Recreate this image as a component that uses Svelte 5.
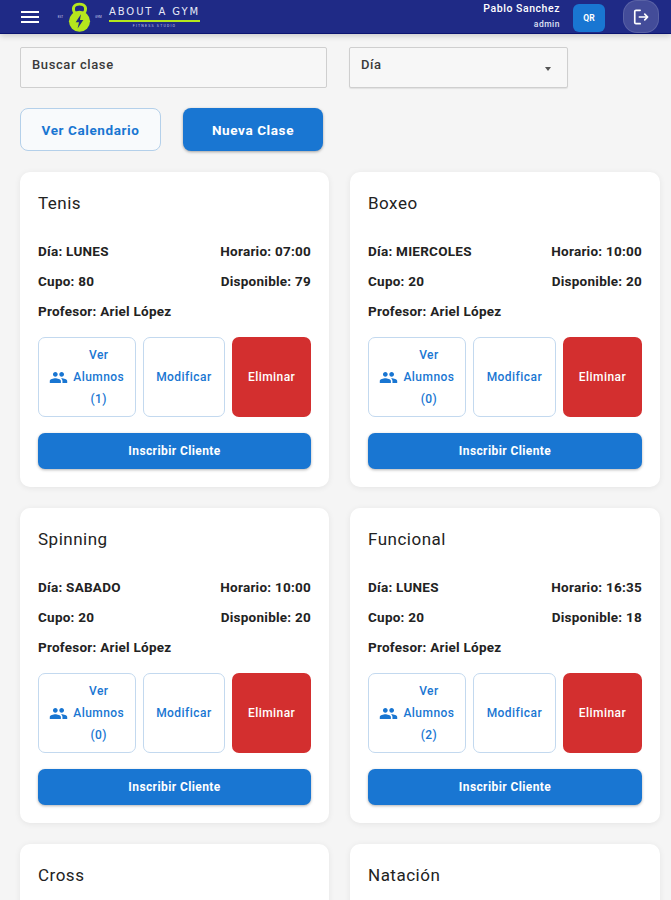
<script>
  const clases = [
    { nombre: "Tenis", dia: "LUNES", horario: "07:00", cupo: 80, disponible: 79, alumnos: 1 },
    { nombre: "Boxeo", dia: "MIERCOLES", horario: "10:00", cupo: 20, disponible: 20, alumnos: 0 },
    { nombre: "Spinning", dia: "SABADO", horario: "10:00", cupo: 20, disponible: 20, alumnos: 0 },
    { nombre: "Funcional", dia: "LUNES", horario: "16:35", cupo: 20, disponible: 18, alumnos: 2 },
    { nombre: "Cross" },
    { nombre: "Natación" },
  ];
</script>

<div class="page">
  <header class="topbar">
    <button class="menu" aria-label="Menu">
      <span></span><span></span><span></span>
    </button>
    <div class="logo">
      <span class="est">EST</span>
      <svg class="bell" viewBox="0 0 24 32" width="23" height="31">
        <path d="M7.5 12 C4 7 5.500 2 12 2 C18.500 2 20 7 16.500 12" fill="none" stroke="#b5e61d" stroke-width="3" />
        <ellipse cx="12" cy="20" rx="11" ry="11" fill="#b5e61d" />
        <path d="M13.500 12.500 L8 21 H11.500 L10 27.500 L16 18.500 H12.500 Z" fill="#1f2a86" />
      </svg>
      <span class="est">GYM</span>
      <div class="brand">
        <span class="brand-name">ABOUT A GYM</span>
        <span class="brand-line"></span>
        <span class="brand-sub">FITNESS STUDIO</span>
      </div>
    </div>
    <div class="user">
      <span class="user-name">Pablo Sanchez</span>
      <span class="user-role">admin</span>
    </div>
    <button class="qr">QR</button>
    <button class="logout" aria-label="Salir">
      <svg viewBox="0 0 24 24" width="20" height="20" fill="none" stroke="#fff" stroke-width="2" stroke-linecap="round" stroke-linejoin="round">
        <path d="M11 4H6a1.500 1.500 0 0 0-1.500 1.500v13A1.500 1.500 0 0 0 6 20h5" />
        <path d="M10 12h10M16.500 8.500 20 12l-3.500 3.500" />
      </svg>
    </button>
  </header>

  <main class="content">
    <div class="filters">
      <div class="field search">Buscar clase</div>
      <div class="field select">
        Día
        <span class="caret"></span>
      </div>
    </div>

    <div class="actions">
      <button class="btn-calendar">Ver Calendario</button>
      <button class="btn-new">Nueva Clase</button>
    </div>

    <div class="grid">
      {#each clases as clase}
        <article class="card">
          <h2>{clase.nombre}</h2>
          {#if clase.dia}
            <div class="row">
              <span>Día: {clase.dia}</span>
              <span>Horario: {clase.horario}</span>
            </div>
            <div class="row">
              <span>Cupo: {clase.cupo}</span>
              <span>Disponible: {clase.disponible}</span>
            </div>
            <div class="row">
              <span>Profesor: Ariel López</span>
            </div>
            <div class="card-buttons">
              <button class="outline alumnos">
                <svg viewBox="0 0 24 24" width="19" height="19" fill="#1976d2">
                  <path d="M16 11c1.660 0 2.990-1.340 2.990-3S17.660 5 16 5s-3 1.340-3 3 1.340 3 3 3zm-8 0c1.660 0 2.990-1.340 2.990-3S9.660 5 8 5 5 6.340 5 8s1.340 3 3 3zm0 2c-2.330 0-7 1.170-7 3.500V19h14v-2.500c0-2.330-4.670-3.500-7-3.500zm8 0c-.290 0-.620.020-.970.050 1.160.840 1.970 1.970 1.970 3.450V19h6v-2.500c0-2.330-4.670-3.500-7-3.500z" />
                </svg>
                <span class="alumnos-text">Ver<br />Alumnos<br />({clase.alumnos})</span>
              </button>
              <button class="outline modificar">Modificar</button>
              <button class="danger">Eliminar</button>
            </div>
            <button class="inscribir">Inscribir Cliente</button>
          {/if}
        </article>
      {/each}
    </div>
  </main>
</div>

<style>
  :global(body) {
    overflow: hidden;
  }

  .page {
    height: 900px;
    overflow: hidden;
    background: #f5f5f5;
    font-family: Roboto, "Liberation Sans", sans-serif;
    color: #222;
  }

  button {
    font-family: inherit;
    cursor: pointer;
  }

  .topbar {
    height: 33px;
    display: flex;
    align-items: center;
    background: #1f2a86;
    border-bottom: 1px solid #0b1470;
    box-shadow: 0 2px 6px rgba(0, 0, 0, 0.18);
    color: #fff;
    box-sizing: content-box;
  }

  .menu {
    width: 18px;
    margin-left: 21px;
    padding: 0;
    display: flex;
    flex-direction: column;
    gap: 3px;
    background: none;
    border: none;
  }

  .menu span {
    height: 2px;
    background: #fff;
  }

  .logo {
    display: flex;
    align-items: center;
    margin-left: 17px;
    gap: 3px;
  }

  .est {
    font-size: 3px;
    width: 9px;
    text-align: center;
    color: #cfd3ee;
  }

  .bell {
    margin-top: 2px;
  }

  .brand {
    display: flex;
    flex-direction: column;
    align-items: center;
    margin-left: 3px;
    margin-top: 3px;
    width: 91px;
  }

  .brand-name {
    font-family: "DejaVu Sans", sans-serif;
    font-size: 10px;
    line-height: 12px;
    letter-spacing: 1.900px;
    white-space: nowrap;
    color: #e8eaf8;
  }

  .brand-line {
    width: 100%;
    height: 2px;
    margin-top: 2px;
    background: #b5e61d;
  }

  .brand-sub {
    font-size: 3.500px;
    line-height: 8px;
    letter-spacing: 1.200px;
    color: #c5c9e8;
  }

  .user {
    margin-left: auto;
    display: flex;
    flex-direction: column;
    align-items: flex-end;
    font-weight: 500;
  }

  .user-name {
    font-size: 10.500px;
    line-height: 15px;
    letter-spacing: 0.550px;
  }

  .user-role {
    font-size: 8.500px;
    line-height: 15px;
    margin-top: 1px;
    letter-spacing: 0.500px;
    color: #dfe2f5;
  }

  .qr {
    width: 32px;
    height: 28px;
    margin-left: 13px;
    padding: 0;
    margin-top: 2px;
    border: none;
    border-radius: 6px;
    background: #1976d2;
    color: #fff;
    font-size: 8.500px;
    font-weight: 700;
  }

  .logout {
    width: 36px;
    height: 33px;
    margin-left: 18px;
    margin-right: 12px;
    padding: 0;
    display: flex;
    align-items: center;
    justify-content: center;
    background: rgba(255, 255, 255, 0.16);
    border: 1px solid rgba(255, 255, 255, 0.12);
    border-radius: 14px;
  }

  .content {
    padding: 13px 10px 0 20px;
  }

  .filters {
    display: flex;
    gap: 22px;
  }

  .field {
    height: 41px;
    box-sizing: border-box;
    padding: 8px 11px;
    background: #f7f7f7;
    border: 1px solid #cfcfcf;
    border-radius: 2px;
    font-size: 13px;
    font-weight: 500;
    line-height: 17px;
    letter-spacing: 0.600px;
    color: #3a3a3a;
  }

  .search {
    width: 307px;
  }

  .select {
    width: 219px;
    position: relative;
    box-shadow: 0 1px 1px rgba(0, 0, 0, 0.08);
  }

  .caret {
    position: absolute;
    right: 16px;
    top: 19px;
    border-left: 3.500px solid transparent;
    border-right: 3.500px solid transparent;
    border-top: 4px solid #555;
  }

  .actions {
    display: flex;
    gap: 22px;
    margin-top: 20px;
  }

  .actions button {
    height: 43px;
    padding: 0;
    border-radius: 8px;
    font-size: 13.500px;
    font-weight: 700;
    letter-spacing: 0.600px;
  }

  .btn-calendar {
    width: 141px;
    background: #f8fafc;
    border: 1px solid #b4d0ea;
    color: #1976d2;
  }

  .btn-new {
    width: 140px;
    background: #1976d2;
    border: none;
    color: #fff;
    box-shadow: 0 1px 3px rgba(0, 0, 0, 0.35);
  }

  .grid {
    display: grid;
    grid-template-columns: 309px 310px;
    gap: 21px;
    margin-top: 21px;
  }

  .card {
    min-height: 315px;
    box-sizing: border-box;
    padding: 20px 18px 18px;
    background: #fff;
    border-radius: 10px;
    box-shadow: 0 1px 6px rgba(0, 0, 0, 0.07);
  }

  h2 {
    margin: 0 0 21px;
    font-size: 17px;
    font-weight: 400;
    line-height: 23px;
    letter-spacing: 0.500px;
    color: #222;
  }

  .row {
    display: flex;
    justify-content: space-between;
    height: 30px;
    align-items: center;
    font-size: 13.500px;
    font-weight: 700;
    letter-spacing: 0.250px;
    color: #222;
  }

  .card-buttons {
    display: flex;
    gap: 7px;
    height: 80px;
    margin-top: 11px;
  }

  .card-buttons button {
    padding: 0;
    border-radius: 7px;
    font-size: 12px;
    font-weight: 500;
    letter-spacing: 0.450px;
  }

  .outline {
    background: #fff;
    border: 1px solid #c3d9ef;
    color: #1976d2;
  }

  .alumnos {
    flex: 97 1 0;
    display: flex;
    align-items: center;
    justify-content: center;
    gap: 5px;
  }

  .alumnos-text {
    line-height: 22px;
    text-align: center;
  }

  .modificar {
    flex: 82 1 0;
  }

  .danger {
    flex: 80 1 0;
    background: #d32f2f;
    border: none;
    color: #fff;
  }

  .inscribir {
    display: block;
    width: 100%;
    height: 36px;
    margin-top: 16px;
    padding: 0;
    border: none;
    border-radius: 7px;
    background: #1976d2;
    color: #fff;
    font-size: 12px;
    font-weight: 700;
    letter-spacing: 0.400px;
    box-shadow: 0 1px 3px rgba(0, 0, 0, 0.3);
  }
</style>
